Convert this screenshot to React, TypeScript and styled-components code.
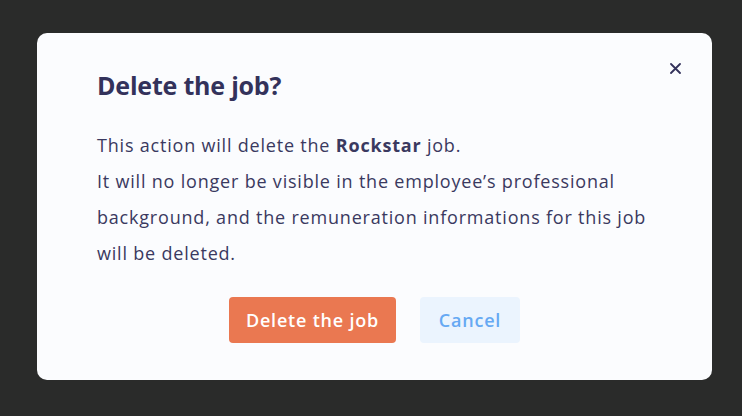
import React from "react";
import styled, { createGlobalStyle } from "styled-components";

const Global = createGlobalStyle`
  html, body { margin: 0; padding: 0; background: #2a2b2a; }
  body { font-family: "Open Sans", Lato, sans-serif; }
`;

const Backdrop = styled.div`
  width: 742px;
  height: 416px;
  background: #2a2b2a;
  box-sizing: border-box;
  padding: 33px 30px 36px 37px;
  display: flex;
`;

const Modal = styled.div`
  position: relative;
  flex: 1;
  background: #fbfcfe;
  border-radius: 10px;
  padding: 35px 60px 0 60px;
  box-sizing: border-box;
  color: #33325b;
  display: flex;
  flex-direction: column;
`;

const Title = styled.h2`
  margin: 0;
  font-size: 25px;
  font-weight: 700;
  line-height: 34px;
  letter-spacing: -0.2px;
`;

const Body = styled.div`
  margin-top: 25px;
  font-size: 18px;
  line-height: 36px;
  color: #3a3960;
  letter-spacing: 0.8px;
`;

const Line = styled.p`
  margin: 0;
`;

const Actions = styled.div`
  margin-top: 26px;
  display: flex;
  justify-content: center;
  gap: 24px;
`;

const Button = styled.button<{ $variant: "danger" | "ghost" }>`
  height: 46px;
  border: none;
  border-radius: 4px;
  padding: 0;
  font-family: "Open Sans", Lato, sans-serif;
  font-size: 18px;
  font-weight: 600;
  letter-spacing: 0.8px;
  cursor: pointer;
  background: ${(p) => (p.$variant === "danger" ? "#ea7851" : "#ebf4fe")};
  color: ${(p) => (p.$variant === "danger" ? "#ffffff" : "#66a9f3")};
  width: ${(p) => (p.$variant === "danger" ? "167px" : "100px")};
`;

const Close = styled.button`
  position: absolute;
  top: 30px;
  right: 31px;
  width: 11px;
  height: 11px;
  padding: 0;
  border: none;
  background: transparent;
  display: flex;
  cursor: pointer;
`;

export default function App() {
  return (
    <>
      <Global />
      <Backdrop>
        <Modal>
          <Close aria-label="Close">
            <svg width="11" height="11" viewBox="0 0 11 11">
              <path d="M1 1 L10 10 M10 1 L1 10" stroke="#33325b" strokeWidth="1.8" strokeLinecap="round" />
            </svg>
          </Close>
          <Title>Delete the job?</Title>
          <Body>
            <Line>
              This action will delete the <strong>Rockstar</strong> job.
            </Line>
            <Line>
              It will no longer be visible in the employee’s professional background, and the remuneration informations for this job will be deleted.
            </Line>
          </Body>
          <Actions>
            <Button $variant="danger">Delete the job</Button>
            <Button $variant="ghost">Cancel</Button>
          </Actions>
        </Modal>
      </Backdrop>
    </>
  );
}
